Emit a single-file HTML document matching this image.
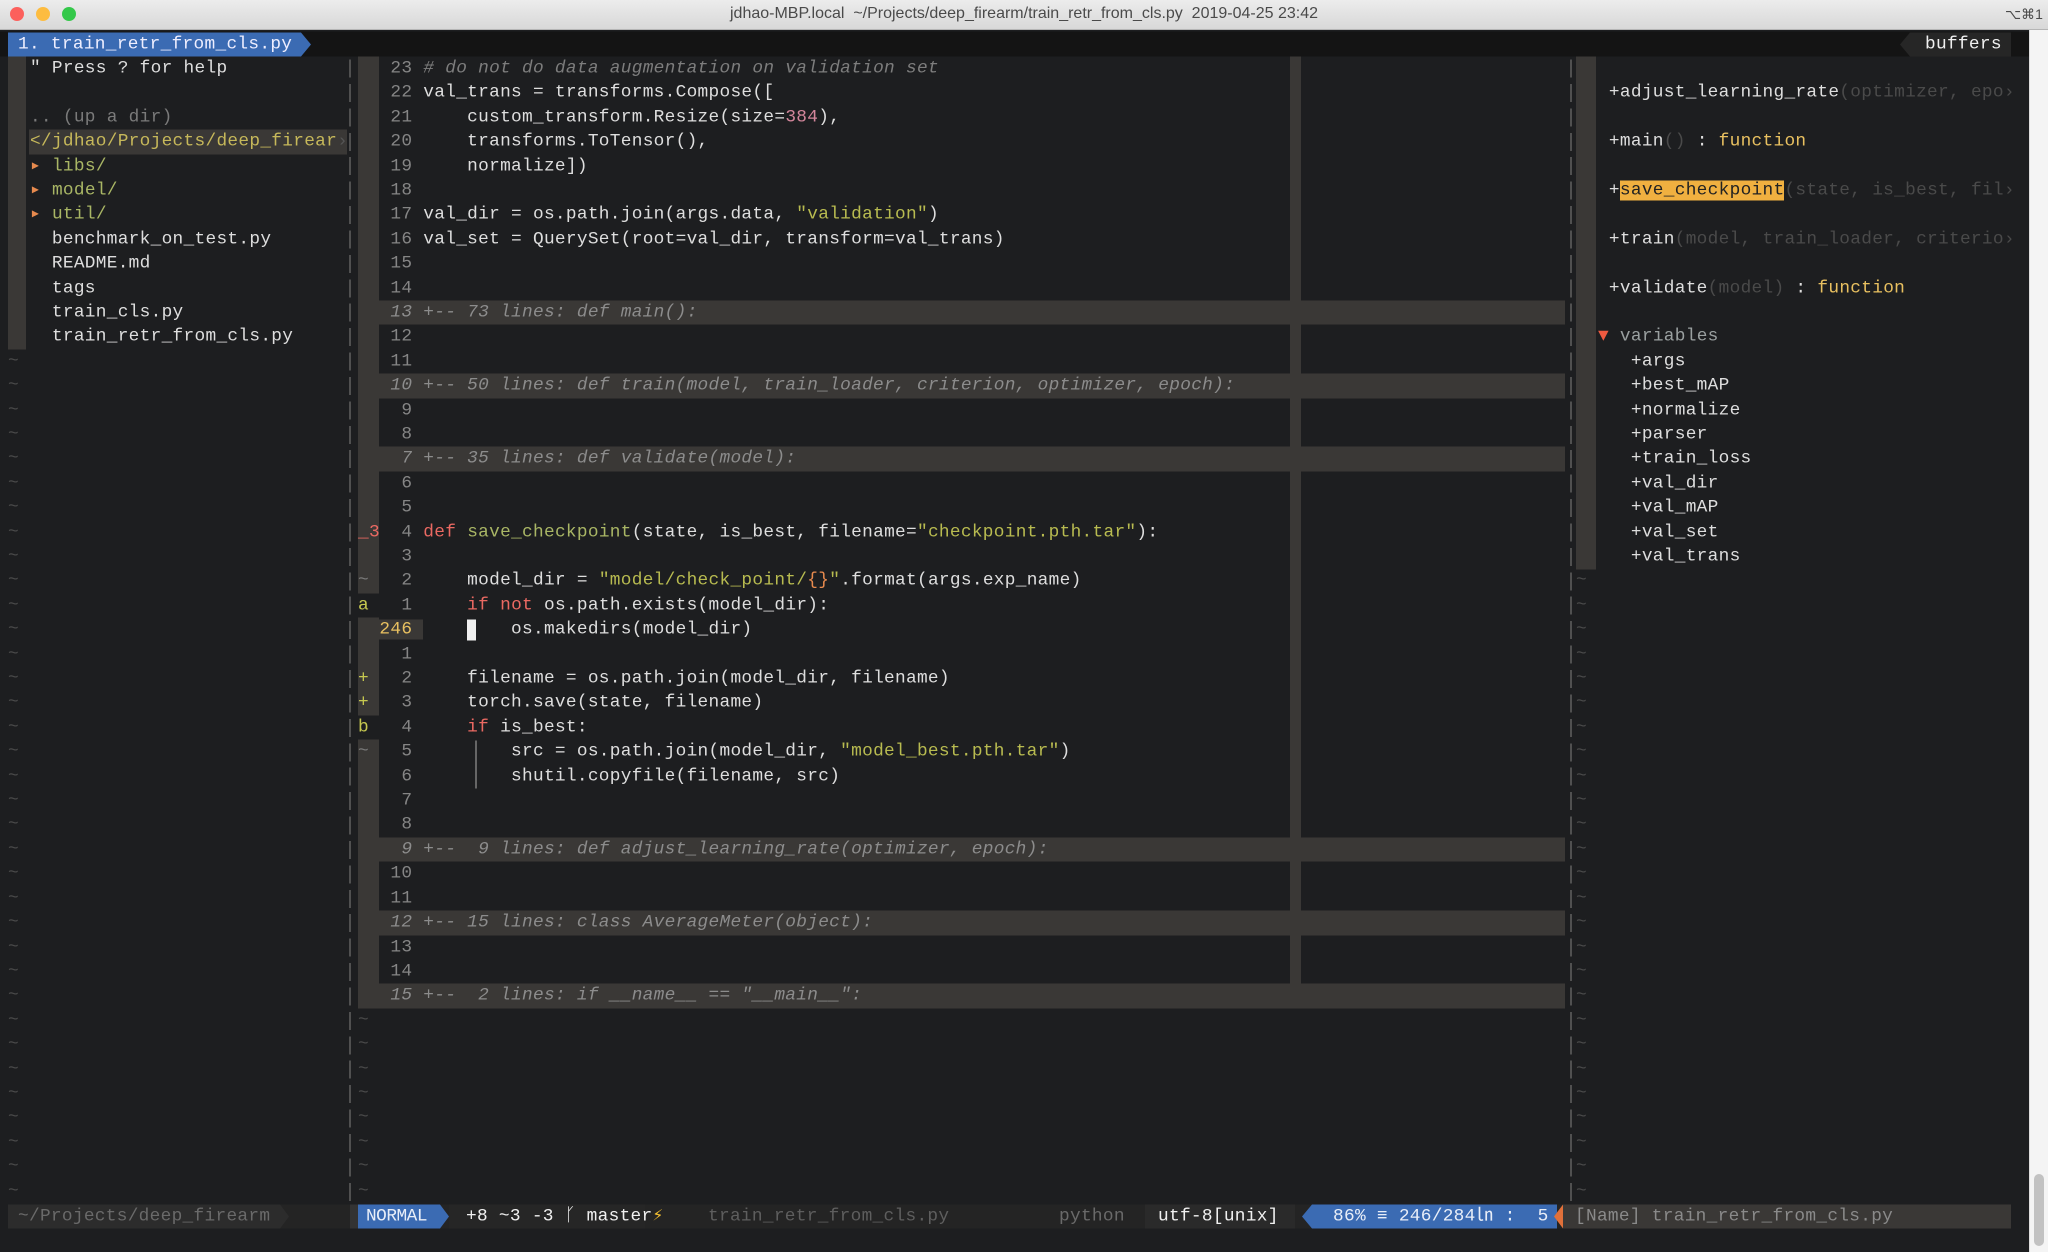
<!DOCTYPE html>
<html><head><meta charset="utf-8"><style>
*{margin:0;padding:0;box-sizing:border-box}
html,body{width:2048px;height:1252px;overflow:hidden;background:#1d1e20}
body{position:relative;font-family:"Liberation Mono","DejaVu Sans Mono",monospace;font-size:17.8px;color:#dedede;letter-spacing:0.3px}
.row{height:24.42px;line-height:24.42px;white-space:pre;position:relative}
.abs{position:absolute !important}
.pane{position:absolute;top:53.9px}
.c{color:#7d7d7d;font-style:italic}
.k{color:#ea6962}
.f{color:#a9b665}
.s{color:#b8bb50}
.n{color:#d3869b}
.o{color:#e78a4e}
.ln{color:#858585}
.g{color:#7a7a7a}
.sg{display:inline-block;width:21.4px;height:24.42px;vertical-align:top}
.gb{background:#3a3836}
.fold{background:#3a3836;color:#8c8c8c;font-style:italic}
.t{color:#4a4a4a}
.sep{position:absolute;top:53.9px;width:2px;height:1147px;background:repeating-linear-gradient(to bottom,transparent 0,transparent 3px,#505050 3px,#505050 21px,transparent 21px,transparent 24.42px)}
#w{position:absolute;left:0;top:0;width:2048px;height:1252px;transform:translateY(2.5px)}
</style></head><body>
<!-- title bar -->
<div class="abs" style="left:0;top:0;width:2048px;height:30px;background:linear-gradient(#ececec,#d8d8d8);border-bottom:1px solid #b5b5b5"></div>
<div class="abs" style="left:10px;top:7px;width:14px;height:14px;border-radius:50%;background:#fc605c"></div>
<div class="abs" style="left:36px;top:7px;width:14px;height:14px;border-radius:50%;background:#fdbc40"></div>
<div class="abs" style="left:62px;top:7px;width:14px;height:14px;border-radius:50%;background:#34c84a"></div>
<div class="abs" style="left:0;top:0;width:2048px;height:28px;line-height:28px;text-align:center;font-family:'Liberation Sans',sans-serif;font-size:16px;letter-spacing:0;color:#4a4a4a;white-space:pre">jdhao-MBP.local  ~/Projects/deep_firearm/train_retr_from_cls.py  2019-04-25 23:42</div>
<div class="abs" style="left:2005px;top:0;height:28px;line-height:28px;font-family:'Liberation Sans','DejaVu Sans',sans-serif;font-size:14px;letter-spacing:0;color:#4a4a4a">⌥⌘1</div>

<!-- right strip -->
<div class="abs" style="left:2029px;top:30px;width:19px;height:1222px;background:#f4f4f4;border-left:1px solid #ddd"></div>
<div class="abs" style="left:2034px;top:1174px;width:10px;height:72px;border-radius:5px;background:#c2c2c2"></div>

<div id="w">
<!-- tabline -->
<div class="abs" style="left:0;top:28.5px;width:2029px;height:25.4px;background:#141414"></div>
<div class="abs" style="left:8px;top:29.5px;width:293px;height:24.42px;background:#3b6bb3"></div>
<div class="abs" style="left:301px;top:29.5px;width:0;height:0;border-top:12.2px solid transparent;border-bottom:12.2px solid transparent;border-left:10px solid #3b6bb3"></div>
<div class="abs row" style="left:18px;top:29.5px;color:#eef">1. train_retr_from_cls.py</div>
<div class="abs" style="left:1900px;top:29.5px;width:0;height:0;border-top:12.2px solid transparent;border-bottom:12.2px solid transparent;border-right:10px solid #262626"></div>
<div class="abs" style="left:1910px;top:29.5px;width:101px;height:24.42px;background:#262626"></div>
<div class="abs row" style="left:1925px;top:29.5px;color:#f0f0f0">buffers</div>

<!-- separators -->
<div class="sep" style="left:349px"></div>
<div class="sep" style="left:1570px"></div>

<!-- NERDTree -->
<div class="abs gb" style="left:8px;top:53.9px;width:18px;height:293px"></div>
<div class="abs" style="left:29px;top:127.2px;width:318px;height:24.42px;background:#3a3836"></div>
<div class="pane" style="left:8px">
<div class="row">  " Press ? for help</div>
<div class="row"> </div>
<div class="row g">  .. (up a dir)</div>
<div class="row" style="color:#c6b85a">  &lt;/jdhao/Projects/deep_firear<span style="color:#555">›</span></div>
<div class="row">  <span class="o">▸</span> <span class="f">libs/</span></div>
<div class="row">  <span class="o">▸</span> <span class="f">model/</span></div>
<div class="row">  <span class="o">▸</span> <span class="f">util/</span></div>
<div class="row">    benchmark_on_test.py</div>
<div class="row">    README.md</div>
<div class="row">    tags</div>
<div class="row">    train_cls.py</div>
<div class="row">    train_retr_from_cls.py</div>
<div class="row t">~</div><div class="row t">~</div><div class="row t">~</div><div class="row t">~</div><div class="row t">~</div>
<div class="row t">~</div><div class="row t">~</div><div class="row t">~</div><div class="row t">~</div><div class="row t">~</div>
<div class="row t">~</div><div class="row t">~</div><div class="row t">~</div><div class="row t">~</div><div class="row t">~</div>
<div class="row t">~</div><div class="row t">~</div><div class="row t">~</div><div class="row t">~</div><div class="row t">~</div>
<div class="row t">~</div><div class="row t">~</div><div class="row t">~</div><div class="row t">~</div><div class="row t">~</div>
<div class="row t">~</div><div class="row t">~</div><div class="row t">~</div><div class="row t">~</div><div class="row t">~</div>
<div class="row t">~</div><div class="row t">~</div><div class="row t">~</div><div class="row t">~</div><div class="row t">~</div>
</div>

<!-- main pane -->
<div class="abs" style="left:1290px;top:53.9px;width:11px;height:952px;background:#3a3836"></div>
<div class="abs" style="left:475px;top:737.7px;width:1.5px;height:48.8px;background:#666"></div>
<div class="abs" style="left:467px;top:617px;width:9px;height:21px;background:#f0f0f0"></div>
<div class="pane" style="left:358px;width:1207px">
<div class="row"><span class="sg gb"></span><span class="ln"> 23 </span><span class="c"># do not do data augmentation on validation set</span></div>
<div class="row"><span class="sg gb"></span><span class="ln"> 22 </span>val_trans = transforms.Compose([</div>
<div class="row"><span class="sg gb"></span><span class="ln"> 21 </span>    custom_transform.Resize(size=<span class="n">384</span>),</div>
<div class="row"><span class="sg gb"></span><span class="ln"> 20 </span>    transforms.ToTensor(),</div>
<div class="row"><span class="sg gb"></span><span class="ln"> 19 </span>    normalize])</div>
<div class="row"><span class="sg gb"></span><span class="ln"> 18 </span></div>
<div class="row"><span class="sg gb"></span><span class="ln"> 17 </span>val_dir = os.path.join(args.data, <span class="s">"validation"</span>)</div>
<div class="row"><span class="sg gb"></span><span class="ln"> 16 </span>val_set = QuerySet(root=val_dir, transform=val_trans)</div>
<div class="row"><span class="sg gb"></span><span class="ln"> 15 </span></div>
<div class="row"><span class="sg gb"></span><span class="ln"> 14 </span></div>
<div class="row"><span class="sg gb"></span><span class="fold" style="display:inline-block;width:1186px"> 13 +-- 73 lines: def main():</span></div>
<div class="row"><span class="sg gb"></span><span class="ln"> 12 </span></div>
<div class="row"><span class="sg gb"></span><span class="ln"> 11 </span></div>
<div class="row"><span class="sg gb"></span><span class="fold" style="display:inline-block;width:1186px"> 10 +-- 50 lines: def train(model, train_loader, criterion, optimizer, epoch):</span></div>
<div class="row"><span class="sg gb"></span><span class="ln">  9 </span></div>
<div class="row"><span class="sg gb"></span><span class="ln">  8 </span></div>
<div class="row"><span class="sg gb"></span><span class="fold" style="display:inline-block;width:1186px">  7 +-- 35 lines: def validate(model):</span></div>
<div class="row"><span class="sg gb"></span><span class="ln">  6 </span></div>
<div class="row"><span class="sg gb"></span><span class="ln">  5 </span></div>
<div class="row"><span class="sg gb k">_3</span><span class="ln">  4 </span><span class="k">def</span> <span class="f">save_checkpoint</span>(state, is_best, filename=<span class="s">"checkpoint.pth.tar"</span>):</div>
<div class="row"><span class="sg gb"></span><span class="ln">  3 </span></div>
<div class="row"><span class="sg gb g">~</span><span class="ln">  2 </span>    model_dir = <span class="s">"model/check_point/<span class="o">{}</span>"</span>.format(args.exp_name)</div>
<div class="row"><span class="sg" style="color:#c6c850">a</span><span class="ln">  1 </span>    <span class="k">if</span> <span class="k">not</span> os.path.exists(model_dir):</div>
<div class="row"><span class="sg gb"></span><span style="background:#3a3836;color:#e8c060">246 </span>        os.makedirs(model_dir)</div>
<div class="row"><span class="sg gb"></span><span class="ln">  1 </span></div>
<div class="row"><span class="sg gb" style="color:#c6c850">+</span><span class="ln">  2 </span>    filename = os.path.join(model_dir, filename)</div>
<div class="row"><span class="sg gb" style="color:#c6c850">+</span><span class="ln">  3 </span>    torch.save(state, filename)</div>
<div class="row"><span class="sg" style="color:#c6c850">b</span><span class="ln">  4 </span>    <span class="k">if</span> is_best:</div>
<div class="row"><span class="sg gb g">~</span><span class="ln">  5 </span>        src = os.path.join(model_dir, <span class="s">"model_best.pth.tar"</span>)</div>
<div class="row"><span class="sg gb"></span><span class="ln">  6 </span>        shutil.copyfile(filename, src)</div>
<div class="row"><span class="sg gb"></span><span class="ln">  7 </span></div>
<div class="row"><span class="sg gb"></span><span class="ln">  8 </span></div>
<div class="row"><span class="sg gb"></span><span class="fold" style="display:inline-block;width:1186px">  9 +--  9 lines: def adjust_learning_rate(optimizer, epoch):</span></div>
<div class="row"><span class="sg gb"></span><span class="ln"> 10 </span></div>
<div class="row"><span class="sg gb"></span><span class="ln"> 11 </span></div>
<div class="row"><span class="sg gb"></span><span class="fold" style="display:inline-block;width:1186px"> 12 +-- 15 lines: class AverageMeter(object):</span></div>
<div class="row"><span class="sg gb"></span><span class="ln"> 13 </span></div>
<div class="row"><span class="sg gb"></span><span class="ln"> 14 </span></div>
<div class="row"><span class="sg gb"></span><span class="fold" style="display:inline-block;width:1186px"> 15 +--  2 lines: if __name__ == "__main__":</span></div>
<div class="row t">~</div><div class="row t">~</div><div class="row t">~</div><div class="row t">~</div>
<div class="row t">~</div><div class="row t">~</div><div class="row t">~</div><div class="row t">~</div>
</div>

<!-- tagbar -->
<div class="abs gb" style="left:1576px;top:53.9px;width:20px;height:513px"></div>
<div class="pane" style="left:1576px">
<div class="row"> </div>
<div class="row">   +adjust_learning_rate<span class="t">(optimizer, epo›</span></div>
<div class="row"> </div>
<div class="row">   +main<span class="t">()</span> : <span style="color:#e8c060">function</span></div>
<div class="row"> </div>
<div class="row">   +<span style="background:#f0b040;color:#222">save_checkpoint</span><span class="t">(state, is_best, fil›</span></div>
<div class="row"> </div>
<div class="row">   +train<span class="t">(model, train_loader, criterio›</span></div>
<div class="row"> </div>
<div class="row">   +validate<span class="t">(model)</span> : <span style="color:#e8c060">function</span></div>
<div class="row"> </div>
<div class="row">  <span style="color:#f05a40">▼</span> <span style="color:#9aa0a0">variables</span></div>
<div class="row">     +args</div>
<div class="row">     +best_mAP</div>
<div class="row">     +normalize</div>
<div class="row">     +parser</div>
<div class="row">     +train_loss</div>
<div class="row">     +val_dir</div>
<div class="row">     +val_mAP</div>
<div class="row">     +val_set</div>
<div class="row">     +val_trans</div>
<div class="row t">~</div><div class="row t">~</div><div class="row t">~</div><div class="row t">~</div><div class="row t">~</div>
<div class="row t">~</div><div class="row t">~</div><div class="row t">~</div><div class="row t">~</div><div class="row t">~</div>
<div class="row t">~</div><div class="row t">~</div><div class="row t">~</div><div class="row t">~</div><div class="row t">~</div>
<div class="row t">~</div><div class="row t">~</div><div class="row t">~</div><div class="row t">~</div><div class="row t">~</div>
<div class="row t">~</div><div class="row t">~</div><div class="row t">~</div><div class="row t">~</div><div class="row t">~</div>
<div class="row t">~</div>
</div>

<!-- statusline -->
<div class="abs" style="left:8px;top:1201.6px;width:2003px;height:24.42px;background:#242424"></div>
<div class="abs" style="left:8px;top:1201.6px;width:272px;height:24.42px;background:#2c2c2c"></div>
<div class="abs" style="left:280px;top:1201.6px;border-top:12.2px solid transparent;border-bottom:12.2px solid transparent;border-left:9px solid #2c2c2c"></div>
<div class="abs row" style="left:18px;top:1201.6px;color:#6a6a6a">~/Projects/deep_firearm</div>
<div class="abs" style="left:350px;top:1201.6px;width:8px;height:24.42px;background:#333"></div>
<div class="abs" style="left:358px;top:1201.6px;width:82px;height:24.42px;background:#3b6bb3"></div>
<div class="abs" style="left:440px;top:1201.6px;border-top:12.2px solid transparent;border-bottom:12.2px solid transparent;border-left:9px solid #3b6bb3"></div>
<div class="abs row" style="left:366px;top:1201.6px;color:#e8eef8;letter-spacing:-0.5px">NORMAL</div>
<div class="abs" style="left:449px;top:1201.6px;width:196px;height:24.42px;background:#262626"></div>
<div class="abs row" style="left:466px;top:1201.6px;color:#f0f0f0">+8 ~3 -3 ᚴ master<span style="color:#f5c030">⚡</span></div>
<div class="abs row" style="left:708px;top:1201.6px;color:#5e5e5e">train_retr_from_cls.py</div>
<div class="abs row" style="left:1059px;top:1201.6px;color:#6a6a6a">python</div>
<div class="abs" style="left:1145px;top:1201.6px;width:150px;height:24.42px;background:#2a2a2a"></div>
<div class="abs row" style="left:1158px;top:1201.6px;color:#f0f0f0">utf-8[unix]</div>
<div class="abs" style="left:1302px;top:1201.6px;border-top:12.2px solid transparent;border-bottom:12.2px solid transparent;border-right:10px solid #3b6bb3"></div>
<div class="abs" style="left:1312px;top:1201.6px;width:245px;height:24.42px;background:#3b6bb3"></div>
<div class="abs row" style="left:1333px;top:1201.6px;color:#e8eef8">86% ≡ 246/284㏑ :  5</div>
<div class="abs" style="left:1554px;top:1201.6px;border-top:12.2px solid transparent;border-bottom:12.2px solid transparent;border-right:9px solid #e0703a"></div>
<div class="abs" style="left:1563px;top:1201.6px;width:448px;height:24.42px;background:#3a3836"></div>
<div class="abs row" style="left:1575px;top:1201.6px;color:#8a8a8a">[Name] train_retr_from_cls.py</div>
</div>
</body></html>
